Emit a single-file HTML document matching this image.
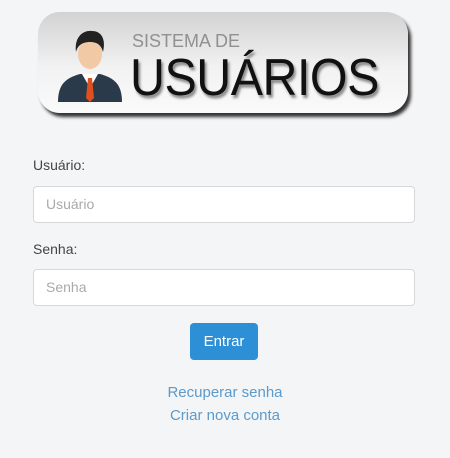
<!DOCTYPE html>
<html><head><style>
body{margin:0;width:450px;height:458px;background:#f4f5f7;font-family:"Liberation Sans",sans-serif;position:relative;overflow:hidden}
.logo{position:absolute;left:38px;top:12px;width:370px;height:101px;border-radius:22px;background:linear-gradient(#d2d2d2,#f2f2f2 55%,#fafafa);box-shadow:3px 4px 3px #333;}
.s1{position:absolute;left:94px;top:19px;font-size:18px;color:#909090}
.s2{position:absolute;left:92px;top:36px;font-size:52px;color:#111;letter-spacing:-0.5px;transform:scaleX(.93);transform-origin:left;text-shadow:2px 3px 3px #888;}
label{position:absolute;left:33px;font-size:14px;color:#444}
.in{position:absolute;left:33px;width:380px;height:35px;background:#fff;border:1px solid #d6d8db;border-radius:4px;font-size:14px;color:#aaa;line-height:35px;text-indent:12px}
.btn{position:absolute;left:190px;top:323px;width:68px;height:37px;background:#2d8fd6;border-radius:4px;color:#fff;font-size:15px;text-align:center;line-height:37px}
.lk{position:absolute;left:0;width:450px;text-align:center;font-size:15px;color:#5b9acb}
</style></head><body>
<div class="logo">
<svg style="position:absolute;left:18px;top:14px" width="68" height="76" viewBox="0 0 68 76">
<path d="M2 76 C2 58 10 52 24 48 L44 48 C58 52 66 58 66 76Z" fill="#2b3a4a"/>
<path d="M26 48 L34 62 L42 48Z" fill="#fff"/>
<path d="M32 52 L36 52 L38 72 L34 76 L30 72Z" fill="#e0501e"/>
<ellipse cx="34" cy="28" rx="12" ry="15" fill="#f1c9a5"/>
<path d="M20 26 C18 10 28 4 36 5 C46 5 50 14 47 26 C45 18 40 16 34 16 C28 16 22 18 20 26Z" fill="#222"/>
</svg>
<div class="s1">SISTEMA DE</div>
<div class="s2">USUÁRIOS</div>
</div>
<label style="top:157px">Usuário:</label>
<div class="in" style="top:186px">Usuário</div>
<label style="top:241px">Senha:</label>
<div class="in" style="top:269px">Senha</div>
<div class="btn">Entrar</div>
<div class="lk" style="top:384px">Recuperar senha</div>
<div class="lk" style="top:407px">Criar nova conta</div>
</body></html>
